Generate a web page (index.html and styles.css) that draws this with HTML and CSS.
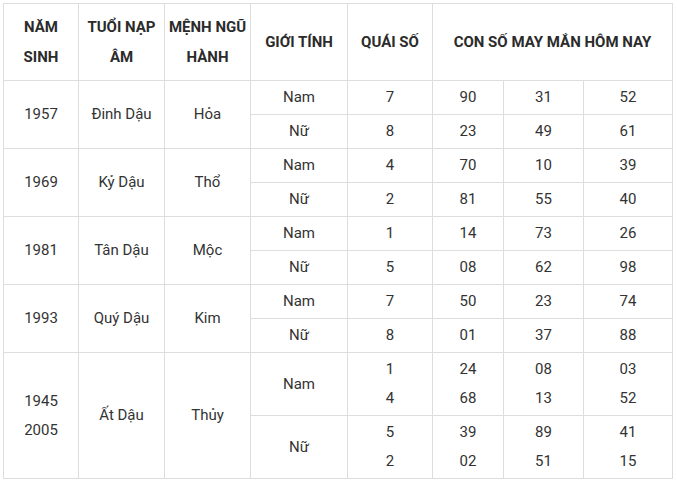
FILE: index.html
```html
<!DOCTYPE html>
<html lang="vi">
<head>
<meta charset="utf-8">
<link rel="stylesheet" href="styles.css">
</head>
<body>
<table class="luck">
<colgroup>
<col class="c1"><col class="c2"><col class="c3"><col class="c4"><col class="c5"><col class="c6"><col class="c7"><col class="c8">
</colgroup>
<thead>
<tr class="head">
<th>NĂM<br>SINH</th>
<th>TUỔI NẠP<br>ÂM</th>
<th>MỆNH NGŨ<br>HÀNH</th>
<th>GIỚI TÍNH</th>
<th>QUÁI SỐ</th>
<th colspan="3">CON SỐ MAY MẮN HÔM NAY</th>
</tr>
</thead>
<tbody>
<tr><td rowspan="2">1957</td><td rowspan="2">Đinh Dậu</td><td rowspan="2">Hỏa</td><td>Nam</td><td>7</td><td>90</td><td>31</td><td>52</td></tr>
<tr><td>Nữ</td><td>8</td><td>23</td><td>49</td><td>61</td></tr>
<tr><td rowspan="2">1969</td><td rowspan="2">Kỷ Dậu</td><td rowspan="2">Thổ</td><td>Nam</td><td>4</td><td>70</td><td>10</td><td>39</td></tr>
<tr><td>Nữ</td><td>2</td><td>81</td><td>55</td><td>40</td></tr>
<tr><td rowspan="2">1981</td><td rowspan="2">Tân Dậu</td><td rowspan="2">Mộc</td><td>Nam</td><td>1</td><td>14</td><td>73</td><td>26</td></tr>
<tr><td>Nữ</td><td>5</td><td>08</td><td>62</td><td>98</td></tr>
<tr><td rowspan="2">1993</td><td rowspan="2">Quý Dậu</td><td rowspan="2">Kim</td><td>Nam</td><td>7</td><td>50</td><td>23</td><td>74</td></tr>
<tr><td>Nữ</td><td>8</td><td>01</td><td>37</td><td>88</td></tr>
<tr class="tall"><td rowspan="2">1945<br>2005</td><td rowspan="2">Ất Dậu</td><td rowspan="2">Thủy</td><td>Nam</td><td>1<br>4</td><td>24<br>68</td><td>08<br>13</td><td>03<br>52</td></tr>
<tr class="tall"><td>Nữ</td><td>5<br>2</td><td>39<br>02</td><td>89<br>51</td><td>41<br>15</td></tr>
</tbody>
</table>
</body>
</html>
```

FILE: styles.css
```css
html, body {
  margin: 0;
  padding: 0;
  background: #ffffff;
}
body {
  padding: 3px 0 0 3px;
  font-family: Roboto, "Liberation Sans", Arial, sans-serif;
  color: #333333;
}
.luck {
  border-collapse: collapse;
  table-layout: fixed;
  width: 669px;
}
.c1 { width: 75px; }
.c2 { width: 86px; }
.c3 { width: 86px; }
.c4 { width: 97px; }
.c5 { width: 85px; }
.c6 { width: 71px; }
.c7 { width: 80px; }
.c8 { width: 89px; }
.luck th,
.luck td {
  border: 1px solid #dddddd;
  text-align: center;
  vertical-align: middle;
  padding: 0;
}
.luck th {
  font-size: 15px;
  font-weight: 700;
  line-height: 30px;
  color: #2b2b2b;
}
.head {
  height: 77px;
}
.luck td {
  font-size: 15px;
  line-height: 29px;
  height: 33px;
}
.luck .tall td {
  height: 62px;
}
```
